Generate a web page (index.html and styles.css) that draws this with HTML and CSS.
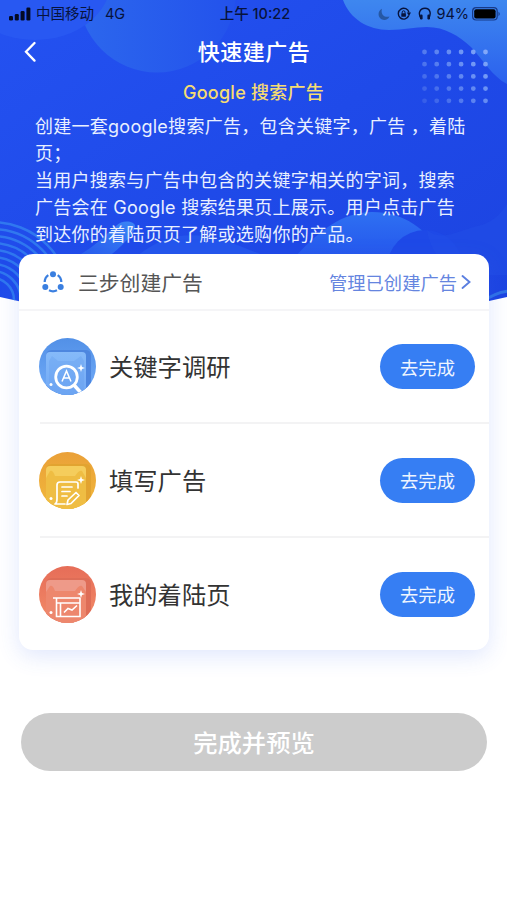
FILE: index.html
```html
<!DOCTYPE html>
<html lang="zh-CN">
<head>
<meta charset="utf-8">
<title>快速建广告</title>
<link rel="stylesheet" href="styles.css">
</head>
<body>
<main class="screen">
  <svg class="backdrop" viewBox="0 0 507 330" aria-hidden="true">
    <defs>
      <clipPath id="hero"><path d="M0 0H507V297Q254 357 0 297Z"/></clipPath>
      <linearGradient id="base" x1="0" y1="0" x2="1" y2="1"><stop offset="0" stop-color="#2452f1"/><stop offset=".5" stop-color="#1f4ae9"/><stop offset="1" stop-color="#1c43e0"/></linearGradient>
      <linearGradient id="orb" x1="0" y1="0" x2="1" y2="0"><stop offset="0" stop-color="#2c67ed"/><stop offset="1" stop-color="#2352ec"/></linearGradient>
      <linearGradient id="wave" x1="0" y1="0" x2="0" y2="1"><stop offset="0" stop-color="#3e87ef"/><stop offset="1" stop-color="#2b61ee"/></linearGradient>
      <linearGradient id="hill" x1="0" y1="0" x2="0" y2="1"><stop offset="0" stop-color="#2e70f2"/><stop offset="1" stop-color="#2454ec"/></linearGradient>
      <linearGradient id="streak" x1="1" y1="0" x2="0" y2="1"><stop offset="0" stop-color="#3b85f5"/><stop offset="1" stop-color="#214eea"/></linearGradient>
      <linearGradient id="fade" gradientUnits="userSpaceOnUse" x1="420" y1="104" x2="490" y2="50"><stop offset="0" stop-color="#3159e8"/><stop offset="1" stop-color="#86acfa"/></linearGradient>
    </defs>
    <g clip-path="url(#hero)">
      <path fill="url(#base)" d="M0 0H507V330H0Z"/>
      <circle cx="157" cy="-6" r="78.500" fill="url(#orb)"/>
      <ellipse cx="35" cy="-20" rx="76" ry="60" fill="#2858f2"/>
      <path fill="url(#wave)" d="M343 0C350 19 368 30 389 30C404 30 414 27 427 27C445 27 459 36 471 47C483 60 493 77 507 84V0Z"/>
      <path fill="none" stroke="url(#fade)" stroke-width="4.800" stroke-linecap="round" stroke-dasharray="0 12.200" d="M424.500 52H487M424.500 64.200H487M424.500 76.400H487M424.500 88.600H487M424.500 100.800H487"/>
      <path fill="url(#streak)" d="M116 226C122 219 135 221 135 226C137 232 112 258 93 266L65 262C90 252 104 236 116 226Z"/>
      <path fill="#2455ec" d="M130 262C160 235 185 230 225 240L300 270Z"/>
      <path fill="url(#hill)" d="M290 262C318 232 339 213 372 212C406 212 427 230 447 260Z"/>
      <circle cx="425" cy="268" r="38" fill="#1e49e7"/>
      <path fill="#2452e9" d="M482 225C496 220 502 212 507 204V275H485C446 279 430 250 427 230C442 243 461 229 482 225Z" opacity=".35"/>
      <path fill="none" stroke="#398be8" stroke-width="3" opacity=".65" d="M482 302C489 297 497 292 510 291"/>
      <g fill="none" stroke="#3483f1" stroke-width="2.500" opacity=".8">
        <circle cx="-8" cy="300" r="78"/><circle cx="-8" cy="300" r="71"/><circle cx="-8" cy="300" r="64"/><circle cx="-8" cy="300" r="57"/><circle cx="-8" cy="300" r="50"/><circle cx="-8" cy="300" r="43"/><circle cx="-8" cy="300" r="36"/><circle cx="-8" cy="300" r="29"/><circle cx="-8" cy="300" r="22"/>
      </g>
    </g>
  </svg>

  <div class="status">
    <div class="carrier">
      <svg width="22" height="14" viewBox="0 0 22 14"><rect x="0" y="9" width="4" height="4.500" rx="1.200"/><rect x="5.800" y="7" width="4" height="6.500" rx="1.200"/><rect x="11.600" y="4" width="4" height="9.500" rx="1.200"/><rect x="17.400" y="0.500" width="4" height="13" rx="1.200"/></svg>
      <span class="operator">中国移动</span><span>4G</span>
    </div>
    <div class="clock">上午 10:22</div>
    <div class="indicators">
      <svg class="moon" width="12" height="13" viewBox="0 0 12 13"><path d="M4 .8C-.5 3-.5 9 3.500 11.200C6.800 13 10.200 11.500 11.500 8.500C6 10 2.400 6 4 .8Z"/></svg>
      <svg class="lock" width="14" height="14" viewBox="0 0 14 14"><path d="M11.800 8.500A5.400 5.400 0 1 1 12 5.500" fill="none" stroke="currentColor" stroke-width="1.400"/><path d="M9.800 5.500H14L12 9Z"/><rect x="4.300" y="6.300" width="4.600" height="3.500" rx=".5"/><path d="M5.200 6.500V5.200A1.400 1.400 0 0 1 8 5.200V6.500" fill="none" stroke="currentColor"/></svg>
      <svg class="phones" width="14" height="14" viewBox="0 0 14 14"><path d="M3.500 11.800C-.5 7 1.500 1.200 7 1.200S13.500 7 10.500 11.800" fill="none" stroke="currentColor" stroke-width="1.400"/><rect x="2" y="7.500" width="2.600" height="5" rx="1.200"/><rect x="9.400" y="7.500" width="2.600" height="5" rx="1.200"/></svg>
      <span>94%</span>
      <svg class="battery" width="29" height="14" viewBox="0 0 29 14"><rect x=".6" y=".7" width="24.600" height="12.300" rx="3.500" fill="none" stroke="#173a88" stroke-width="1.200"/><rect x="2.200" y="2.300" width="21.400" height="9.100" rx="2"/><path d="M26.500 4.800Q29 7 26.500 9.200Z" fill="#173a88"/></svg>
    </div>
  </div>

  <header class="nav">
    <svg width="13" height="22" viewBox="0 0 13 22"><path d="M11.500 2L3 10.800L11.500 19.600" fill="none" stroke="#fff" stroke-width="2.300" stroke-linecap="round"/></svg>
    <h1>快速建广告</h1>
  </header>

  <section class="intro">
    <h2>Google 搜索广告</h2>
    <p>创建一套google搜索广告，包含关键字，广告 ，着陆</p>
    <p>页；</p>
    <p>当用户搜索与广告中包含的关键字相关的字词，搜索</p>
    <p>广告会在 Google 搜索结果页上展示。用户点击广告</p>
    <p>到达你的着陆页页了解或选购你的产品。</p>
  </section>

  <section class="card">
    <div class="card-head">
      <svg width="22" height="22" viewBox="0 0 22 22" fill="none" stroke="#3a7fe0" stroke-width="2.200"><path d="M6.300 4.200A8.500 8.500 0 0 0 2.700 11M15.700 4.200A8.500 8.500 0 0 1 19.300 11M7 19.300Q11 21.300 15 19.300"/><g fill="#3a7fe0" stroke="none"><circle cx="11" cy="3.200" r="3"/><circle cx="3.300" cy="16" r="3"/><circle cx="18.700" cy="16" r="3"/></g></svg>
      <h3>三步创建广告</h3>
      <a>管理已创建广告<svg width="10" height="16" viewBox="0 0 10 16"><path d="M1.500 2L8.500 8L1.500 14" fill="none" stroke="#5b7fe0" stroke-width="1.900" stroke-linecap="round"/></svg></a>
    </div>
    <div class="step">
      <svg class="badge" viewBox="0 0 57 57">
        <defs><clipPath id="disc"><circle cx="28.500" cy="28.500" r="28.500"/></clipPath><linearGradient id="blue" x2="0" y2="1"><stop stop-color="#5290e7"/><stop offset="1" stop-color="#72acf8"/></linearGradient><linearGradient id="bluePanel" x2="0" y2="1"><stop stop-color="#86baf9"/><stop offset="1" stop-color="#6da5f4"/></linearGradient></defs>
        <g clip-path="url(#disc)"><path fill="url(#blue)" d="M0 0H57V57H0Z"/><path fill="#4d86df" d="M7 57V18Q7 12 13 12H47Q52 12 52 18V57Z"/><rect x="7" y="14" width="40" height="50" rx="4" fill="url(#bluePanel)"/><path fill="#659eee" d="M10 23L13 18L19 23H35L42 18L45 23V57H10Z" opacity=".35"/>
        <g fill="none" stroke="#fff"><circle cx="27.500" cy="39" r="10.800" stroke-width="2.800"/><path stroke-width="3.500" d="M35 47L43 56"/><path stroke-width="1.500" d="M23 43.500L27.500 33L32 43.500M24.500 40H30.500"/></g><path fill="#fff" d="M42 26L43 29L46 30L43 31L42 34L41 31L38 30L41 29Z"/><circle cx="12" cy="46.500" r="1.500" fill="#fff"/></g>
      </svg>
      <h4>关键字调研</h4><button>去完成</button>
    </div>
    <div class="step">
      <svg class="badge" viewBox="0 0 57 57">
        <defs><linearGradient id="gold" x2="0" y2="1"><stop stop-color="#eaa038"/><stop offset="1" stop-color="#f1b83b"/></linearGradient></defs>
        <g clip-path="url(#disc)"><path fill="url(#gold)" d="M0 0H57V57H0Z"/><path fill="#e2a330" d="M7 57V18Q7 12 13 12H47Q52 12 52 18V57Z"/><rect x="7" y="14" width="40" height="50" rx="4" fill="#f5cd5c"/><path fill="#edb739" d="M7 26L11 19Q14 18 16 24H36Q40 18 43 19L47 26V57H7Z" opacity=".7"/>
        <g fill="none" stroke="#fff" stroke-width="1.700" stroke-linejoin="round" stroke-linecap="round"><path d="M39 36V32Q39 30 37 30H21Q18 30 18 33V47Q18 51 16 52H26M23 35H33M23 39.500H31M23 44H28"/><path d="M29 48L37 40.500L40 43.500L32 51.500L28 52.500Z"/></g><path fill="#fff" d="M42 24L43 27L46 28L43 29L42 32L41 29L38 28L41 27Z"/><circle cx="12" cy="46.500" r="1.500" fill="#fff"/></g>
      </svg>
      <h4>填写广告</h4><button>去完成</button>
    </div>
    <div class="step">
      <svg class="badge" viewBox="0 0 57 57">
        <defs><linearGradient id="coral" x2="0" y2="1"><stop stop-color="#e66d58"/><stop offset="1" stop-color="#f28b68"/></linearGradient></defs>
        <g clip-path="url(#disc)"><path fill="url(#coral)" d="M0 0H57V57H0Z"/><path fill="#de6d57" d="M7 57V18Q7 12 13 12H47Q52 12 52 18V57Z"/><rect x="7" y="14" width="40" height="50" rx="4" fill="#ee9a89"/><path fill="#ec8064" d="M7 26L11 20Q14 19 16 25H36Q40 19 43 20L47 26V57H7Z" opacity=".75"/>
        <g fill="none" stroke="#fff" stroke-width="1.600"><path d="M14 32H41.500M17.500 32V50.500H41V32M17 37H41M21.500 37V50.500M25 46.500L29 42.500L33 44L38 39.500"/></g><path fill="#fff" d="M42 24L43 27L46 28L43 29L42 32L41 29L38 28L41 27Z"/><circle cx="12" cy="46.500" r="1.500" fill="#fff"/></g>
      </svg>
      <h4>我的着陆页</h4><button>去完成</button>
    </div>
  </section>
  <button class="preview">完成并预览</button>
</main>
</body>
</html>
```
FILE: styles.css
```css
* { box-sizing: border-box; }
body {
  margin: 0;
  background: #fff;
  font-family: Inter, "Noto Sans CJK SC", sans-serif;
}
h1, h2, h3, h4, p { margin: 0; font-weight: 400; white-space: nowrap; }
button { border: 0; padding: 0; font-family: inherit; }
svg { display: block; flex: none; }
.screen {
  position: relative;
  isolation: isolate;
  width: 507px;
  height: 900px;
  overflow: hidden;
}
.backdrop { position: absolute; z-index: -1; top: 0; left: 0; width: 507px; height: 330px; }
.status {
  display: grid;
  grid-template-columns: 1fr auto 1fr;
  align-items: center;
  height: 28px;
  padding: 0 6px 0 9px;
  color: #07133c;
  font-size: 14.5px;
  line-height: 28px;
}
.carrier, .indicators { display: flex; align-items: center; }
.carrier svg { fill: #030a24; }
.operator { margin: 0 11px 0 5px; }
.clock { font-weight: 500; }
.indicators { justify-content: flex-end; fill: currentColor; }
.moon { fill: #2658a5; margin-right: 7px; }
.lock { margin-right: 7px; }
.phones { margin-right: 4px; }
.battery { margin-left: 3px; fill: #000; }
.nav {
  display: grid;
  grid-template-columns: 40px 1fr 40px;
  align-items: center;
  height: 48px;
  padding: 0 22px 0 23px;
}
.nav h1 { padding-bottom: 4px; color: #fff; text-align: center; font-size: 22px; font-weight: 500; letter-spacing: .5px; }
.intro { padding: 3px 0 0 35px; color: #e9f0ff; font-size: 18px; line-height: 27px; letter-spacing: .26px; }
.intro h2 {
  height: 34px;
  margin-left: -35px;
  color: #f5dc72;
  text-align: center;
  font-size: 18px;
  line-height: 27px;
  font-weight: 500;
}
.card {
  width: 470px;
  height: 396px;
  margin: 6px 0 0 19px;
  border-radius: 14px;
  background: #fff;
  box-shadow: 0 6px 22px rgba(65, 105, 240, .16);
}
.card-head {
  display: flex;
  align-items: center;
  height: 57px;
  padding: 0 18px 0 23px;
  border-bottom: 2px solid #f5f5f7;
}
.card-head h3 { margin-left: 14px; color: #555; font-size: 20.8px; }
.card-head a { display: flex; align-items: center; gap: 4px; margin-left: auto; color: #6585df; font-size: 18.3px; }
.step {
  display: flex;
  align-items: center;
  height: 113px;
  margin-left: 21px;
  padding-right: 14px;
  border-bottom: 2px solid #f3f3f4;
}
.step:nth-child(3) { height: 114px; }
.step:last-child { height: 112px; border: 0; }
.badge { width: 57px; height: 57px; margin-left: -1px; }
.step h4 { margin-left: 13px; padding-bottom: 2px; color: #333; font-size: 24.3px; }
.step button {
  width: 95px;
  height: 45px;
  margin-left: auto;
  border-radius: 23px;
  background: #367ef3;
  color: #eef5ff;
  font-size: 18.3px;
}
.preview {
  display: block;
  width: 466px;
  height: 58px;
  margin: 63px 0 0 21px;
  padding-bottom: 2px;
  border-radius: 29px;
  background: #ccc;
  color: #fff;
  font-size: 24.3px;
  font-weight: 500;
}
```
